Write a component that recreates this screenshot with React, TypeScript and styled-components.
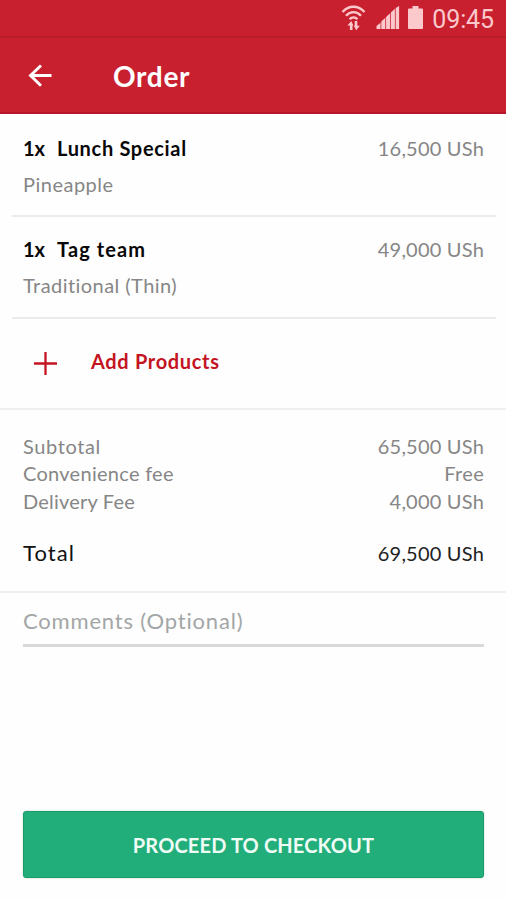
import React from 'react';
import styled, { createGlobalStyle } from 'styled-components';

const GlobalStyle = createGlobalStyle`
  * { box-sizing: border-box; }
  body { margin: 0; background: #fefefe; }
`;

const Screen = styled.main`
  display: flex;
  flex-direction: column;
  width: 100%;
  height: 900px;
  overflow: hidden;
  background: #fefefe;
  color: #868686;
  font-family: Lato, 'Open Sans', sans-serif;
  font-size: 20px;
  line-height: 27px;
`;

const StatusBar = styled.header`
  display: flex;
  align-items: center;
  justify-content: flex-end;
  height: 38px;
  padding: 0 12px 1px 0;
  background: #c8202f;
  border-bottom: 2px solid #b91d2b;
  color: #fbc9cc;
`;

const StatusIcon = styled.svg<{ $gap: number }>`
  flex: none;
  margin-right: ${(p) => p.$gap}px;
`;

const Clock = styled.time`
  font-family: Roboto, sans-serif;
  font-size: 25px;
  line-height: 34px;
  padding-top: 4px;
  letter-spacing: -0.1px;
`;

const AppBar = styled.nav`
  display: flex;
  align-items: center;
  height: 76px;
  padding: 1px 28px 0;
  background: #c8202f;
  border-bottom: 2px solid #b9142b;
  color: #fff;
`;

const BackButton = styled.button`
  display: flex;
  width: 85px;
  padding: 0;
  border: 0;
  background: none;
  color: inherit;
`;

const Title = styled.h1`
  margin: 0;
  padding-top: 1px;
  font-size: 28px;
  font-weight: 700;
  line-height: 38px;
  letter-spacing: 0.7px;
`;

const Items = styled.section`
  padding: 0 10px 0 12px;
`;

const Item = styled.article<{ $height: number; $top: number }>`
  height: ${(p) => p.$height}px;
  padding: ${(p) => p.$top}px 12px 0 11px;
  border-bottom: 2px solid #ebebeb;
`;

const Row = styled.div`
  display: flex;
  justify-content: space-between;
`;

const Name = styled.div`
  display: flex;
  color: #080808;
  font-weight: 700;
`;

const Quantity = styled.span`
  width: 34px;
`;

const Label = styled.span<{ $spacing: number }>`
  letter-spacing: ${(p) => p.$spacing}px;
`;

const Price = styled.span<{ $spacing?: number; $strong?: boolean }>`
  letter-spacing: ${(p) => p.$spacing ?? 0.2}px;
  color: ${(p) => (p.$strong ? '#222' : 'inherit')};
`;

const Option = styled.div`
  margin-top: 9px;
`;

const AddButton = styled.button`
  display: flex;
  align-items: center;
  width: 100%;
  height: 91px;
  padding: 0 0 0 34px;
  border: 0;
  border-bottom: 2px solid #efefef;
  background: none;
  color: #c41422;
  font: inherit;
  font-weight: 700;
  text-align: left;
`;

const PlusIcon = styled.svg`
  flex: none;
  margin-right: 34px;
`;

const AddLabel = styled.span`
  padding-bottom: 5px;
  letter-spacing: 0.67px;
`;

const Summary = styled.section`
  height: 183px;
  padding: 23px 22px 0 23px;
  border-bottom: 2px solid #efefef;
`;

const FeeRow = styled(Row)`
  line-height: 27.3px;
`;

const TotalRow = styled(Row)`
  align-items: baseline;
  margin-top: 24px;
`;

const TotalLabel = styled.span`
  color: #111;
  font-size: 22px;
  letter-spacing: 1.1px;
`;

const Comments = styled.label`
  height: 54px;
  margin: 0 22px 0 23px;
  padding-top: 14px;
  border-bottom: 3px solid #d9d9d9;
  color: #a3a6a6;
  font-size: 22px;
  letter-spacing: 0.82px;
`;

const Checkout = styled.button`
  height: 67px;
  margin: auto 22px 22px 23px;
  padding: 2px 0 0;
  border: 1px solid #169d6a;
  border-radius: 3px;
  background: #22ae7a;
  color: #effbf5;
  font: inherit;
  font-weight: 700;
  letter-spacing: 0.15px;
  box-shadow: 0 0 2px rgba(0, 80, 40, 0.25);
`;

const items = [
  { name: 'Lunch Special', spacing: 0.68, option: 'Pineapple', optionSpacing: 0.5, price: '16,500 USh', height: 103, top: 21 },
  { name: 'Tag team', spacing: 1.1, option: 'Traditional (Thin)', optionSpacing: 0.45, price: '49,000 USh', height: 102, top: 19 },
];

const fees = [
  { name: 'Subtotal', spacing: 0.6, price: '65,500 USh', priceSpacing: 0.2 },
  { name: 'Convenience fee', spacing: 0.28, price: 'Free', priceSpacing: 0.3 },
  { name: 'Delivery Fee', spacing: 0.2, price: '4,000 USh', priceSpacing: 0.2 },
];

export default function App() {
  return (
    <>
      <GlobalStyle />
      <Screen>
        <StatusBar>
          <StatusIcon $gap={10} width="25" height="26" viewBox="0 0 25 26" fill="none" stroke="currentColor" strokeWidth="2.3">
            <path d="M1.500 7C7.500 0 17.500 0 23.500 7M5 10.800c4.500-5 10.500-5 15 0M8.500 14.300c2.400-2.500 5.600-2.500 8 0" />
            <path d="M10.200 25v-6M15 16v6" strokeWidth="2.6" />
            <path d="M6.500 20.500l3.700-4.500 2.200 4.500zM12.800 20.700h6l-3.600 4.500z" fill="currentColor" stroke="none" />
          </StatusIcon>
          <StatusIcon $gap={8} width="24" height="23" viewBox="0 0 24 24" fill="currentColor">
            <path d="M0 24v-3.200l4.200-3.400V24zM5 24v-7.800l4.200-3.900V24zM10 24V11.500l4.200-4V24zM15 24V6.700l4.200-3.900V24zM20 24V2.200L23.600 0v24z" />
          </StatusIcon>
          <StatusIcon $gap={9} width="15" height="23" viewBox="0 0 15 23" fill="currentColor">
            <path d="M4.500 0h6v2.500H14q1 0 1 1V22q0 1-1 1H1q-1 0-1-1V3.500q0-1 1-1h3.500z" />
          </StatusIcon>
          <Clock>09:45</Clock>
        </StatusBar>
        <AppBar>
          <BackButton aria-label="Back">
            <svg width="24" height="24" viewBox="0 0 24 24" fill="none" stroke="currentColor" strokeWidth="2.9">
              <path d="M23.500 11.500H2M13 1.500L2.500 11.500 13 21.800" />
            </svg>
          </BackButton>
          <Title>Order</Title>
        </AppBar>
        <Items>
          {items.map((item) => (
            <Item key={item.name} $height={item.height} $top={item.top}>
              <Row>
                <Name>
                  <Quantity>1x</Quantity>
                  <Label $spacing={item.spacing}>{item.name}</Label>
                </Name>
                <Price>{item.price}</Price>
              </Row>
              <Option>
                <Label $spacing={item.optionSpacing}>{item.option}</Label>
              </Option>
            </Item>
          ))}
        </Items>
        <AddButton>
          <PlusIcon width="23" height="23" viewBox="0 0 23 23" fill="none" stroke="currentColor" strokeWidth="2.300">
            <path d="M11.500 0v23M0 11.500h23" />
          </PlusIcon>
          <AddLabel>Add Products</AddLabel>
        </AddButton>
        <Summary>
          {fees.map((fee) => (
            <FeeRow key={fee.name}>
              <Label $spacing={fee.spacing}>{fee.name}</Label>
              <Price $spacing={fee.priceSpacing}>{fee.price}</Price>
            </FeeRow>
          ))}
          <TotalRow>
            <TotalLabel>Total</TotalLabel>
            <Price $strong>69,500 USh</Price>
          </TotalRow>
        </Summary>
        <Comments>Comments (Optional)</Comments>
        <Checkout>PROCEED TO CHECKOUT</Checkout>
      </Screen>
    </>
  );
}
